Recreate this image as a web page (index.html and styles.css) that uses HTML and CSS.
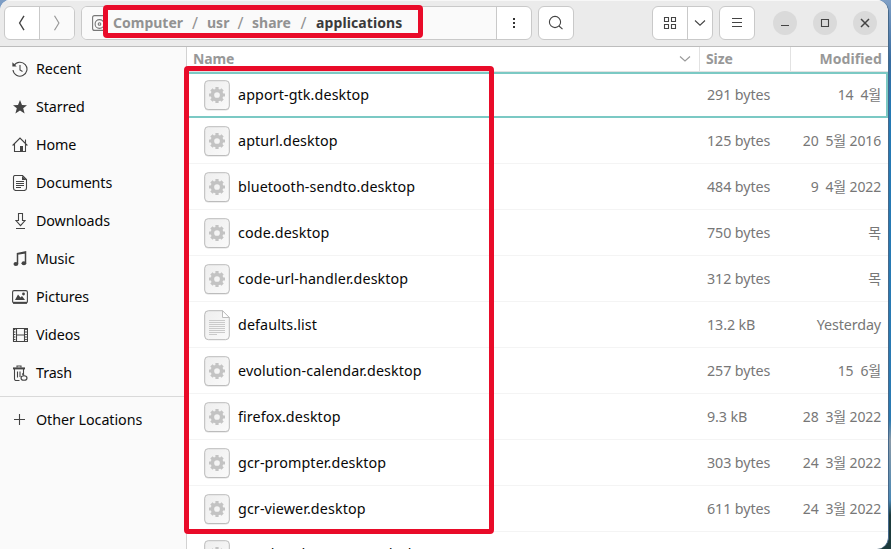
FILE: index.html
```
<!DOCTYPE html>
<html lang="en">
<head>
<meta charset="utf-8">
<title>applications</title>
<link rel="stylesheet" href="styles.css">
</head>
<body>
<svg width="0" height="0" class="defs">
  <defs>
    <linearGradient id="paper" x1="0" y1="0" x2="1" y2="1"><stop offset="0" stop-color="#eeeeee"/><stop offset="1" stop-color="#fafafa"/></linearGradient>
    <symbol id="gear" viewBox="0 0 26 31">
      <rect x=".7" y="1.5" width="24.6" height="29" rx="3.5" fill="#dedede"/>
      <rect x=".7" y=".7" width="24.6" height="28.8" rx="3.5" fill="url(#paper)" stroke="#bcbcbc"/>
      <g fill="none" stroke="#c3c3c3" transform="translate(13 15)">
        <circle r="4.6" stroke-width="3.5"/>
        <g stroke-width="3.2"><path d="M0-8V-5.5M0 8V5.5M-8 0H-5.5M8 0H5.5M-5.6-5.6L-4-4M5.6-5.6L4-4M-5.6 5.6L-4 4M5.6 5.6L4 4"/></g>
      </g>
    </symbol>
    <symbol id="doc" viewBox="0 0 26 31">
      <path d="M4.5.7H18.5L25.3 7.5V26Q25.3 29.7 21.5 29.7H4.5Q.7 29.7.7 26V4.5Q.7.7 4.5.7Z" fill="url(#paper)" stroke="#b8b8b8"/>
      <path d="M18.5.7V7.5H25.3Z" fill="#fff" stroke="#bcbcbc"/>
      <path d="M5 10.5H21M5 12.5H21M5 14.5H21M5 16.5H21M5 18.5H21M5 20.5H21M5 22.5H21M5 24.5H13" stroke="#cacaca"/>
    </symbol>
  </defs>
</svg>
<div class="window">
  <header class="bar">
    <div class="group nav">
      <div class="cell"><svg width="16" height="16" class="ic"><path d="M10 .8L5.6 8 10 15.2" stroke-width="1.4"/></svg></div>
      <div class="cell off"><svg width="16" height="16" class="ic"><path d="M5.5.8L9.9 8 5.5 15.2" stroke-width="1.2"/></svg></div>
    </div>
    <div class="group path">
      <div class="crumbs">
        <svg width="16" height="16" class="ic disk"><rect x=".6" y=".6" width="14" height="14.8" rx="2"/><circle cx="7.5" cy="9" r="4.4"/><circle cx="7.5" cy="9" r="1.3"/></svg>
        <span class="c1">Computer</span><i class="s1">/</i><span class="c2">usr</span><i class="s2">/</i><span class="c3">share</span><i class="s3">/</i><span class="c4">applications</span>
      </div>
      <div class="cell dots"><svg width="4" height="12"><path d="M1 1h2v2H1zM1 5h2v2H1zM1 9h2v2H1z" fill="#333"/></svg></div>
    </div>
    <div class="group search"><svg width="16" height="16" class="ic"><circle cx="7" cy="7" r="5.6"/><path d="M11 11L14.5 14.2"/></svg></div>
    <div class="group view">
      <div class="cell"><svg width="14" height="14" class="ic"><path d="M1.5 1.5h4v4h-4zM8.5 1.5h4v4h-4zM1.5 8.5h4v4h-4zM8.5 8.5h4v4h-4z"/></svg></div>
      <div class="cell drop"><svg width="12" height="8" class="ic"><path d="M1 1.5L6 6.2 11 1.5"/></svg></div>
    </div>
    <div class="group menu"><svg width="12" height="12" class="ic"><path d="M1 1.5H11M1 5.5H11M1 9.5H11"/></svg></div>
    <div class="controls">
      <div class="ctl"><svg width="12" height="12" class="ic"><path d="M2 8.5H10"/></svg></div>
      <div class="ctl"><svg width="12" height="12" class="ic"><path d="M2.5 2.5h7v7h-7z"/></svg></div>
      <div class="ctl"><svg width="12" height="12" class="ic"><path d="M2 2L10 10M10 2L2 10" stroke-width="1.5"/></svg></div>
    </div>
  </header>
  <div class="body">
    <nav class="side">
      <div class="place"><svg width="16" height="16" class="ic"><path d="M2 4.5A7 7 0 1 1 1 9M8 4V9L10.5 10.5"/><path d="M.4 1.2V5.5H4.7Z" fill="#444" stroke="none"/></svg><span>Recent</span></div>
      <div class="place"><svg width="16" height="16" class="ic"><path d="M8 1L10 6 15 6.2 11.2 9.3 12.6 14.6 8 11.6 3.4 14.6 4.8 9.3 1 6.2 6 6Z" fill="#444" stroke="none"/></svg><span>Starred</span></div>
      <div class="place"><svg width="16" height="16" class="ic"><path d="M.6 8.5L8 1 15.4 8.5M2.5 7V14.5H13.5V7M13.5 6V2.5"/><path d="M8 9h3v5H8z" fill="#444" stroke="none"/></svg><span>Home</span></div>
      <div class="place"><svg width="16" height="16" class="ic"><path d="M3 .5H10.5L14.5 4.5V13Q14.5 15.5 12 15.5H4Q1.5 15.5 1.5 13V2Q1.5.5 3 .5ZM4 6.5H12M4 8.5H12M4 10.5H12M4 12.5H9"/><path d="M10 1V5H14.5Z" fill="#444" stroke="none"/></svg><span>Documents</span></div>
      <div class="place"><svg width="16" height="16" class="ic"><path d="M6.5.5H10.5V7.5H13L8.5 12.7 4 7.5H6.5ZM4 15.5H13"/></svg><span>Downloads</span></div>
      <div class="place"><svg width="16" height="16" class="ic"><path d="M5.5 13V2.5L13.5 1V12M5.5 3L13.5 1.7" stroke-width="1.5"/><g fill="#444" stroke="none"><ellipse cx="3.9" cy="13" rx="2.4" ry="2"/><ellipse cx="11.9" cy="12.2" rx="2.4" ry="2"/></g></svg><span>Music</span></div>
      <div class="place"><svg width="16" height="16" class="ic"><rect x=".6" y="1.6" width="14.8" height="12.3" rx="1.5"/><path d="M1 13.8H15" stroke-width="2"/><path d="M3 11L6 5.5 8.5 8.5 10 7 13 11Z" fill="#444" stroke="none"/><circle cx="11.5" cy="5" r="1.4" fill="#444" stroke="none"/></svg><span>Pictures</span></div>
      <div class="place"><svg width="16" height="16" class="ic"><path d="M1.5 1.5H15.5V14.5H1.5ZM4.5 1.5V14.5M12.5 1.5V14.5M4.5 8H12.5"/><path d="M2.5 2V14M14 2V14" stroke-width="1.8" stroke-dasharray="1 1.5"/></svg><span>Videos</span></div>
      <div class="place"><svg width="16" height="16" class="ic"><path d="M5 2.5V1H9V2.5M2.5 4V14Q2.5 15.5 4 15.5H7.5M11.5 4V9M5.5 6.5V12.5M8 6.5V12"/><path d="M1 3.4H13" stroke-width="2"/><path d="M10.3 8.5L12 10.5" stroke-width="1.3"/><ellipse cx="12" cy="13" rx="3" ry="2.3" fill="#fafafa"/></svg><span>Trash</span></div>
      <div class="place other"><svg width="16" height="16" class="ic"><path d="M2 7.5H13M7.5 2V13"/></svg><span>Other Locations</span></div>
    </nav>
    <main class="list">
      <div class="head"><div class="hname"><span>Name</span><svg width="12" height="8" class="ic"><path d="M1 1.5L6 6 11 1.5"/></svg></div><div class="hsize">Size</div><div class="hmod">Modified</div></div>
      <div class="row selected"><svg class="file"><use href="#gear"/></svg><span class="name">apport-gtk.desktop</span><span class="size">291 bytes</span><span class="date k">14&nbsp; 4월</span></div>
      <div class="row"><svg class="file"><use href="#gear"/></svg><span class="name">apturl.desktop</span><span class="size">125 bytes</span><span class="date k">20&nbsp; 5월 2016</span></div>
      <div class="row"><svg class="file"><use href="#gear"/></svg><span class="name">bluetooth-sendto.desktop</span><span class="size">484 bytes</span><span class="date k">9&nbsp; 4월 2022</span></div>
      <div class="row"><svg class="file"><use href="#gear"/></svg><span class="name">code.desktop</span><span class="size">750 bytes</span><span class="date k">목</span></div>
      <div class="row"><svg class="file"><use href="#gear"/></svg><span class="name">code-url-handler.desktop</span><span class="size">312 bytes</span><span class="date k">목</span></div>
      <div class="row"><svg class="file"><use href="#doc"/></svg><span class="name">defaults.list</span><span class="size">13.2 kB</span><span class="date">Yesterday</span></div>
      <div class="row"><svg class="file"><use href="#gear"/></svg><span class="name">evolution-calendar.desktop</span><span class="size">257 bytes</span><span class="date k">15&nbsp; 6월</span></div>
      <div class="row"><svg class="file"><use href="#gear"/></svg><span class="name">firefox.desktop</span><span class="size">9.3 kB</span><span class="date k">28&nbsp; 3월 2022</span></div>
      <div class="row"><svg class="file"><use href="#gear"/></svg><span class="name">gcr-prompter.desktop</span><span class="size">303 bytes</span><span class="date k">24&nbsp; 3월 2022</span></div>
      <div class="row"><svg class="file"><use href="#gear"/></svg><span class="name">gcr-viewer.desktop</span><span class="size">611 bytes</span><span class="date k">24&nbsp; 3월 2022</span></div>
      <div class="row last"><svg class="file"><use href="#gear"/></svg><span class="name">geoclue-demo-agent.desktop</span></div>
    </main>
  </div>
</div>
<div class="mark mark-path"></div>
<div class="mark mark-names"></div>
</body>
</html>
```

FILE: styles.css
```
* { box-sizing: border-box; }
body {
  margin: 0;
  width: 891px;
  height: 549px;
  overflow: hidden;
  background: linear-gradient(#7f9fc6 0, #386ca0 60px, #2479b4 110px, #2b7ab2 420px, #8b9aa8 440px, #4a88b4 500px, #1d3b3c 515px);
  font-family: "Noto Sans", "Noto Sans CJK KR", sans-serif;
  font-size: 14.3px;
  letter-spacing: -0.1px;
  color: #080808;
}
.defs { position: absolute; }
.window {
  width: 889px;
  height: 549px;
  display: flex;
  flex-direction: column;
  background: #fff;
  border-right: 1px solid #45688a;
  border-radius: 10px 12px 12px 0;
  overflow: hidden;
}
.ic { fill: none; stroke: #444; stroke-width: 1.1; flex: none; }
.bar {
  height: 47px;
  flex: none;
  display: flex;
  padding: 5px 0 0 4px;
  background: #ebebeb;
  border-top: 1px solid #f7f7f7;
  border-bottom: 1px solid #bdbdbd;
}
.group {
  height: 34px;
  display: flex;
  align-items: center;
  justify-content: center;
  background: #fff;
  border: 1px solid #c9c9c9;
  border-radius: 6px;
  overflow: hidden;
}
.cell { height: 100%; flex: 1; display: flex; align-items: center; justify-content: center; }
.cell + .cell, .dots { border-left: 1px solid #c9c9c9; }
.nav { width: 71px; }
.off { background: #fafafa; }
.off .ic { stroke: #999; }
.path { width: 451px; margin-left: 6px; }
.crumbs {
  width: 414px;
  height: 100%;
  display: flex;
  align-items: center;
  padding-left: 10px;
  background: #fafafa;
  color: #929292;
  font-weight: 700;
  font-size: 14px;
}
.crumbs span { flex: none; white-space: nowrap; line-height: 20px; padding-bottom: 1px; letter-spacing: 0; }
.crumbs i { font-style: normal; font-weight: 400; font-size: 16px; text-align: center; flex: none; }
.disk { margin-right: 5px; }
.disk.ic { stroke: #777; }
.c1 { width: 70px; }
.c2 { width: 22px; }
.c3 { width: 39px; }
.crumbs .s1 { width: 24px; }
.crumbs .s2 { width: 23px; }
.crumbs .s3 { width: 25px; }
.crumbs .c4 { color: #3a3a3a; letter-spacing: 0.1px; }
.search { width: 36px; margin-left: 6px; }
.view { width: 61px; margin-left: 78px; }
.view .cell:first-child { flex: 0 0 34px; }
.menu { width: 36px; margin-left: 6px; }
.controls { display: flex; gap: 16px; margin: 5px 0 0 18px; }
.ctl {
  width: 24px;
  height: 24px;
  border-radius: 50%;
  background: #dadada;
  display: flex;
  align-items: center;
  justify-content: center;
}
.body { flex: 1; min-height: 0; display: flex; }
.side { width: 187px; flex: none; background: #fafafa; border-right: 1px solid #d2d2d2; padding-top: 3px; }
.place { height: 38px; display: flex; align-items: center; padding-left: 12px; gap: 8px; }
.place span { padding-bottom: 1px; }
.other { margin-top: 4px; height: 46px; border-top: 1px solid #d9d9d9; letter-spacing: -0.05px; }
.list { flex: 1; min-width: 0; overflow: hidden; }
.head {
  height: 25px;
  display: flex;
  border-bottom: 1px solid #e2e2e2;
  color: #989898;
  font-weight: 700;
  font-size: 14px;
  line-height: 24px;
}
.hname { width: 512px; display: flex; justify-content: space-between; align-items: center; padding: 0 8px 0 6px; }
.hname .ic { stroke: #999; }
.hsize { width: 91px; border-left: 1px solid #e2e2e2; padding-left: 6px; }
.hmod { flex: 1; border-left: 1px solid #e2e2e2; padding-right: 6px; text-align: right; letter-spacing: 0.1px; }
.row {
  height: 46px;
  display: flex;
  align-items: center;
  border-bottom: 1px solid #f4f4f4;
  padding: 0 7px 0 17px;
}
.selected { border: 2px solid #7bc9c4; border-left-width: 0; padding-right: 5px; }
.selected span { padding-bottom: 2px; }
.last .name { padding-bottom: 3px; }
.file { width: 26px; height: 31px; margin: 1px 8px 0 0; flex: none; }
.selected .file { margin-top: 0; }
.name { width: 469px; flex: none; white-space: nowrap; letter-spacing: 0.11px; }
.size { color: #777; width: 80px; flex: none; white-space: nowrap; }
.date { color: #777; flex: 1; text-align: right; white-space: nowrap; }
.k { line-height: 20px; font-size: 14px; letter-spacing: -0.15px; padding-top: 1px; }
.mark { position: absolute; border: 5px solid #e90b29; border-radius: 4px; filter: blur(0.4px); }
.mark-path { left: 103px; top: 5px; width: 320px; height: 33px; }
.mark-names { left: 184px; top: 66px; width: 310px; height: 468px; }
```
